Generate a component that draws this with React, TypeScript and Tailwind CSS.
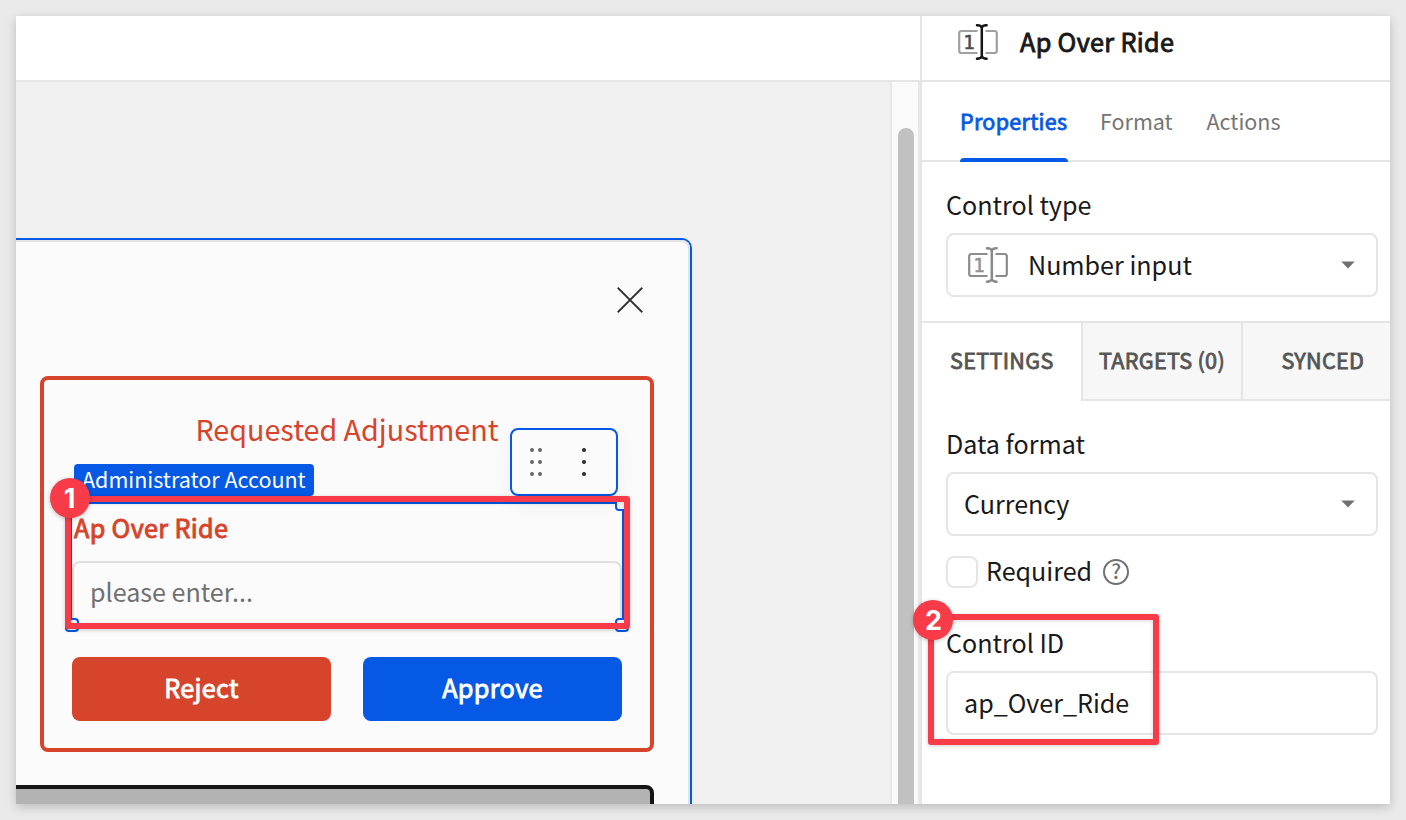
import React from "react";

function NumberInputIcon({ muted = false }: { muted?: boolean }) {
  const frame = muted ? "#8c8c8c" : "#a0a0a0";
  const digit = muted ? "#929292" : "#4a4a4a";
  const beam = muted ? "#8a8a8a" : "#151515";
  return (
    <svg width="40" height="36" viewBox="0 0 40 36" fill="none" className="shrink-0">
      <path d="M19.500 7H3.500A2.300 2.300 0 0 0 1.200 9.300V26.700A2.300 2.300 0 0 0 3.500 29H19.500" stroke={frame} strokeWidth="2.200" />
      <path d="M27.500 7H36.500A2.300 2.300 0 0 1 38.800 9.300V26.700A2.300 2.300 0 0 1 36.500 29H27.500" stroke={frame} strokeWidth="2.200" />
      <path d="M19 1.200C21.500 1.200 23 1.800 23.800 3.300C24.600 1.800 26.100 1.200 28.600 1.200M19 34.800C21.500 34.800 23 34.200 23.800 32.700C24.600 34.200 26.100 34.800 28.600 34.800M23.800 3V33" stroke={beam} strokeWidth="2.500" strokeLinecap="round" />
      <text x="11" y="25" textAnchor="middle" fontSize="19" fontWeight="400" fontFamily="DejaVu Sans Mono, monospace" fill={digit} stroke={digit} strokeWidth="0.500">1</text>
    </svg>
  );
}

function Caret() {
  return (
    <svg width="14" height="8" viewBox="0 0 14 8" className="shrink-0">
      <path d="M0.300 0.500H13.700L7 7.500Z" fill="#707070" />
    </svg>
  );
}

function Handle({ className }: { className: string }) {
  return <span className={`absolute size-[14px] rounded border-2 border-[#0559e5] bg-[#fbfbfb] ${className}`} />;
}

function Badge({ n, className }: { n: number; className: string }) {
  return (
    <span className={`absolute flex size-10 items-center justify-center rounded-full bg-[#f83b48] font-[Inter,sans-serif] text-[27px] font-bold leading-none text-white shadow-[0_1px_4px_rgba(0,0,0,0.25)] ${className}`}>
      {n}
    </span>
  );
}

function Callout({ className }: { className: string }) {
  return <div className={`absolute rounded-[3px] border-[6px] border-[#f83b48] shadow-[0_1px_4px_rgba(0,0,0,0.2),inset_0_1px_4px_rgba(0,0,0,0.15)] ${className}`} />;
}

function Canvas() {
  return (
    <div className="relative min-w-0 flex-1 overflow-hidden bg-[#f0f0f0]">
      <div className="mt-[156px] -ml-4 h-[600px] w-[692px] rounded-tr-[10px] border-2 border-l-0 border-[#0559e5]">
        <div className="h-full rounded-tr-lg border-t-2 border-r-2 border-[#e3e3e3] bg-[#fbfbfb] pl-10">
          <div className="flex h-[134px] justify-end pt-[44px] pr-[44px]">
            <svg width="28" height="28" viewBox="0 0 28 28" stroke="#333333" strokeWidth="1.800">
              <path d="M1.750 1.750L26.250 26.250M26.250 1.750L1.750 26.250" />
            </svg>
          </div>
          <div className="relative h-[376px] w-[614px] rounded-lg border-4 border-[#d6442b] px-7">
            <h2 className="pt-[31px] text-center text-[28.700px] leading-[36px] text-[#d6442b]">Requested Adjustment</h2>
            <div className="mt-[17px] ml-[2px] h-8 w-[240px] rounded bg-[#0559e5] pl-2 text-[21.500px] leading-[30px] text-white">
              Administrator Account
            </div>
            <div className="relative mt-2 h-[121px]">
              <div className="absolute -inset-x-[2px] -top-[2px] -bottom-[2px] border-2 border-[#0559e5]" />
              <label className="relative block pt-[5px] pl-[2px] text-[25.200px] leading-[36px] tracking-[0.350px] text-[#d6442b] [-webkit-text-stroke:0.9px_currentColor]">Ap Over Ride</label>
              <div className="relative mt-[16px] h-16 rounded-lg border-2 border-[#e0e0e0] pl-4 text-[25.100px] leading-[56px] text-[#707070]">
                please enter...
              </div>
              <Handle className="-top-[7px] -right-[7px]" />
              <Handle className="-bottom-[7px] -left-[7px]" />
              <Handle className="-right-[7px] -bottom-[7px]" />
            </div>
            <div className="mt-8 flex gap-8 text-[25.200px] leading-[36px] tracking-[0.350px] text-white [-webkit-text-stroke:0.9px_currentColor]">
              <button className="h-16 flex-1 rounded-lg bg-[#d6442b] pb-1">Reject</button>
              <button className="h-16 flex-1 rounded-lg bg-[#0559e5] pb-1">Approve</button>
            </div>
            <div className="absolute top-[48px] left-[466px] flex h-[68px] w-[108px] items-center rounded-lg border-2 border-[#0559e5] bg-[#fbfbfb] shadow-[0_8px_20px_rgba(0,0,0,0.06)]">
              <svg width="104" height="64" viewBox="0 0 104 64">
                <g fill="#666666">
                  <circle cx="20" cy="20" r="2" /><circle cx="28" cy="20" r="2" />
                  <circle cx="20" cy="32" r="2" /><circle cx="28" cy="32" r="2" />
                  <circle cx="20" cy="44" r="2" /><circle cx="28" cy="44" r="2" />
                </g>
                <g fill="#292929">
                  <circle cx="72" cy="20" r="2" /><circle cx="72" cy="32" r="2" /><circle cx="72" cy="44" r="2" />
                </g>
              </svg>
            </div>
            <Callout className="top-[116px] left-[20.500px] h-[133px] w-[565px]" />
            <Badge n={1} className="top-[98px] left-[5.700px]" />
          </div>
          <div className="mt-[33px] -ml-10 h-20 w-[654px] rounded-lg border-4 border-[#151515] bg-[#b3b3b3]" />
        </div>
      </div>
    </div>
  );
}

function Select({ children }: { children: React.ReactNode }) {
  return (
    <div className="flex h-16 w-[432px] items-center justify-between rounded-lg border-2 border-[#e5e5e5] pr-[21px] pl-4">
      {children}
      <Caret />
    </div>
  );
}

function Inspector() {
  return (
    <aside className="relative flex w-[470px] shrink-0 flex-col border-l-2 border-[#e5e5e5] bg-white text-[25.100px] leading-[36px] text-[#191919]">
      <header className="flex h-[66px] shrink-0 items-start border-b-2 border-[#e5e5e5] pt-2 pl-9">
        <NumberInputIcon />
        <h1 className="-mt-px ml-[22px] text-[25.200px] tracking-[0.350px] [-webkit-text-stroke:0.9px_currentColor]">Ap Over Ride</h1>
      </header>
      <nav className="flex h-20 shrink-0 border-b-2 border-[#e5e5e5] pl-[38px] text-[21.500px] text-[#757575]">
        <div className="relative w-[108px] pt-[21px] tracking-[0.300px] text-[#0559e5] [-webkit-text-stroke:0.8px_currentColor]">
          Properties
          <span className="absolute inset-x-0 -bottom-[2px] h-1 rounded-t bg-[#0559e5]" />
        </div>
        <div className="ml-8 w-[74px] pt-[21px]">Format</div>
        <div className="ml-[32.500px] pt-[21px]">Actions</div>
      </nav>
      <section className="flex h-[159px] shrink-0 flex-col pt-6 pl-6">
        <label className="mb-[11px]">Control type</label>
        <Select>
          <div className="flex items-center pl-1">
            <NumberInputIcon muted />
            <span className="ml-5 pb-[2px]">Number input</span>
          </div>
        </Select>
      </section>
      <div className="flex h-20 shrink-0 border-t-2 border-[#e5e5e5] text-[21.600px] leading-[74px] tracking-[0.300px] text-[#555555] [-webkit-text-stroke:0.8px_currentColor]">
        <div className="w-[159px] pl-7">SETTINGS</div>
        <div className="w-[160px] border-b-2 border-l-2 border-[#e5e5e5] bg-[#f7f7f7] pl-4">TARGETS (0)</div>
        <div className="flex-1 border-b-2 border-l-2 border-[#e5e5e5] bg-[#f7f7f7] pl-[38.500px]">SYNCED</div>
      </div>
      <section className="flex flex-col pt-6 pl-6">
        <label className="mb-[11px]">Data format</label>
        <Select>
          <span className="pb-[2px]">Currency</span>
        </Select>
        <div className="mt-[18px] flex h-9 items-center">
          <span className="size-8 rounded-lg border-2 border-[#e5e5e5]" />
          <span className="ml-2 pb-1">Required</span>
          <span className="ml-[11px] flex size-[26px] items-center justify-center rounded-full border-2 border-[#707070] pb-[2px] text-[20px] font-medium leading-none text-[#707070]">?</span>
        </div>
        <label className="mt-[34px] mb-[11px]">Control ID</label>
        <div className="h-16 w-[432px] rounded-lg border-2 border-[#e5e5e5] pl-4 leading-[58px]">ap_Over_Ride</div>
      </section>
      <Callout className="top-[598px] left-[6px] h-[131px] w-[231px]" />
      <Badge n={2} className="top-[584px] -left-[8.600px]" />
    </aside>
  );
}

export default function App() {
  return (
    <div className="h-[820px] w-[1406px] overflow-hidden bg-[#eaeaea] p-4 font-['Noto_Sans_CJK_SC',sans-serif]">
      <div className="shadow-[0_3px_10px_rgba(0,0,0,0.2)]">
        <main className="flex h-[788px] w-[1374px] overflow-hidden bg-white">
          <div className="flex w-[904px] shrink-0 flex-col">
            <div className="h-[66px] shrink-0 border-b-2 border-[#e5e5e5] bg-white" />
            <div className="flex min-h-0 flex-1">
              <Canvas />
              <div className="flex w-[30px] shrink-0 border-x-2 border-[#e8e8e8] bg-[#fafafa] pt-[46px] pl-[6px]">
                <div className="w-4 rounded-t-full bg-[#c1c1c1]" />
              </div>
            </div>
          </div>
          <Inspector />
        </main>
      </div>
    </div>
  );
}
